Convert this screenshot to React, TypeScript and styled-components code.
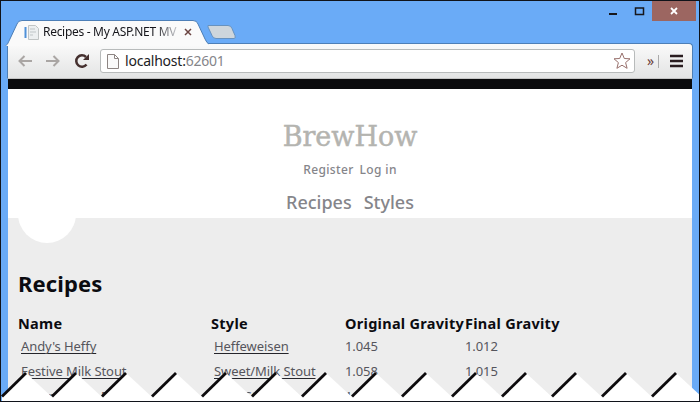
import React from 'react';
import styled, { createGlobalStyle } from 'styled-components';

const GlobalStyle = createGlobalStyle`
  *, *::before, *::after { box-sizing: border-box; }
  body { margin: 0; background: #6aabf7; font-family: "Noto Sans", "Open Sans", sans-serif; }
  svg { display: block; flex: none; }
`;

const BrowserWindow = styled.div`
  position: relative;
  display: flex;
  flex-direction: column;
  width: 700px;
  height: 402px;
  padding: 0 7px;
  border: 1px solid #10131a;
  background: #6aabf7;
  overflow: hidden;
`;

const TitleBar = styled.div`
  display: flex;
  justify-content: flex-end;
  flex: none;
  height: 19px;
  margin-right: -4px;
`;

const WindowButton = styled.div<{ $width: number; $close?: boolean }>`
  display: flex;
  align-items: center;
  justify-content: center;
  width: ${p => p.$width}px;
  height: 20px;
  background: ${p => (p.$close ? '#9c6661' : 'transparent')};
`;

const TabStrip = styled.div`
  display: flex;
  flex: none;
  height: 24px;
`;

const Tab = styled.div`
  position: relative;
  display: flex;
  align-items: center;
  width: 199px;
  height: 24px;
  padding-left: 16px;
`;

const TabShape = styled.svg`
  position: absolute;
  left: -3px;
  top: 0;
`;

const TabTitle = styled.div`
  position: relative;
  width: 137px;
  margin: 0 4px;
  white-space: nowrap;
  font-size: 12px;
  line-height: 20px;
  letter-spacing: -0.3px;
  color: transparent;
  background: linear-gradient(90deg, #15151a 82%, #c9cbd0 98%);
  background-clip: text;
`;

const TabIcon = styled.svg`
  position: relative;
`;

const Toolbar = styled.div`
  display: flex;
  align-items: center;
  flex: none;
  height: 36px;
  margin: -1px -1px 0;
  padding: 0 9px 0 10px;
  border: 1px solid #4d7fb7;
  border-bottom-color: #c4c4c4;
  border-radius: 0 4px 0 0;
  background: linear-gradient(#fafafa, #e3e4e4);
`;

const AddressBar = styled.div`
  display: flex;
  align-items: center;
  width: 536px;
  height: 24px;
  margin-left: 10px;
  padding: 0 3px 0 6px;
  border: 1px solid #b8bbbb;
  border-radius: 3px;
  background: #fff;
`;

const Address = styled.div`
  flex: 1;
  margin-left: 6px;
  font-size: 14px;
  line-height: 20px;
  letter-spacing: -0.22px;
  color: #1c1c24;
`;

const Port = styled.span`
  color: #85858a;
`;

const Chevron = styled.span`
  width: 9px;
  margin-left: 12px;
  font-size: 14px;
  line-height: 18px;
  color: #6b3c38;
`;

const Divider = styled.span`
  width: 1px;
  height: 13px;
  margin: 0 11px 0 2px;
  background: #aaa;
`;

const Page = styled.main`
  flex: 1;
  width: 684px;
  border-top: 10px solid #0b0b0d;
  background: #ededed;
`;

const SiteHeader = styled.header`
  display: flex;
  flex-direction: column;
  align-items: center;
  height: 129px;
  padding-top: 29px;
  background: #fff;
`;

const SiteTitle = styled.div`
  height: 38px;
  font-family: "DejaVu Serif", serif;
  font-size: 27px;
  line-height: 38px;
  white-space: nowrap;
  color: #b4b4b0;
  -webkit-text-stroke: 0.5px #b4b4b0;
`;

const LinkRow = styled.nav<{ $size: number; $gap: number; $height: number; $spacing: number }>`
  display: flex;
  gap: ${p => p.$gap}px;
  font-size: ${p => p.$size}px;
  font-weight: 500;
  line-height: ${p => p.$height}px;
  letter-spacing: ${p => p.$spacing}px;
  color: #85858a;
`;

const Dot = styled.div`
  width: 58px;
  height: 25px;
  margin-left: 10px;
  overflow: hidden;

  &::before {
    content: '';
    display: block;
    width: 58px;
    height: 58px;
    margin-top: -33px;
    border-radius: 50%;
    background: #fff;
  }
`;

const Heading = styled.h1`
  margin: 23px 0 0 10px;
  font-size: 22px;
  font-weight: 700;
  line-height: 34px;
  letter-spacing: 0.1px;
  color: #0b0b10;
`;

const Row = styled.div<{ $head?: boolean }>`
  display: grid;
  grid-template-columns: 193px 134px 120px 120px;
  height: ${p => (p.$head ? 22 : 25)}px;
  padding-left: 10px;
  font-size: ${p => (p.$head ? 14.5 : 13)}px;
  font-weight: ${p => (p.$head ? 700 : 400)};
  line-height: ${p => (p.$head ? 22 : 25)}px;
  letter-spacing: ${p => (p.$head ? 0.28 : -0.08)}px;
  white-space: nowrap;
  color: ${p => (p.$head ? '#0b0b10' : '#55555c')};
`;

const Table = styled.div`
  margin-top: 12px;
`;

const RecordLink = styled.span`
  padding-left: 3px;
  text-decoration: underline;
  text-decoration-color: #24242a;
  text-underline-offset: 2px;
  text-decoration-skip-ink: none;
`;

const TornEdge = styled.svg`
  position: absolute;
  left: -1px;
  bottom: 0;
`;

const recipes = [
  ["Andy's Heffy", 'Heffeweisen', '1.045', '1.012'],
  ['Festive Milk Stout', 'Sweet/Milk Stout', '1.058', '1.015'],
  ['Summer Rye Porter', 'Rare Stout', '1.048', '1.012'],
];

const teeth = Array.from({ length: 14 }, (_, i) => 2 + i * 50);

export default function App() {
  return (
    <>
      <GlobalStyle />
      <BrowserWindow>
        <TitleBar>
          <WindowButton $width={26}>
            <svg width="8" height="20"><path d="M0 13h8" stroke="#17171c" strokeWidth="2" /></svg>
          </WindowButton>
          <WindowButton $width={26}>
            <svg width="11" height="20"><path d="M1.500 7h8v6.500h-8z" fill="none" stroke="#17171c" strokeWidth="1.500" /></svg>
          </WindowButton>
          <WindowButton $width={44} $close>
            <svg width="8" height="8"><path d="M1 1l6 6M7 1L1 7" stroke="#fff" strokeWidth="1.800" /></svg>
          </WindowButton>
        </TitleBar>
        <TabStrip>
          <Tab>
            <TabShape width="204" height="26">
              <path d="M0 26Q3 24 4 21L12 4Q13 .5 17 .5H188Q192 .5 193 4L200 19Q202 23.500 204 24V26Z" fill="#fafafa" />
              <path d="M.5 26Q3 24 4 21L12 4Q13 .5 17 .5H188Q192 .5 193 4L200 19Q202 23.500 204 24" fill="none" stroke="#4d7fb7" />
            </TabShape>
            <TabIcon width="15" height="15">
              <path d="M4.500 .5h7l3 3v11h-10z" fill="#eceff0" stroke="#c0c4c4" />
              <path d="M1.500 2v11" stroke="#4f91d8" strokeWidth="2" />
              <path d="M6 4h5M6 7h6M6 10h3" stroke="#bfc5c7" />
            </TabIcon>
            <TabTitle>Recipes - My ASP.NET MV</TabTitle>
            <TabIcon width="8" height="8"><path d="M1 1l6 6M7 1L1 7" stroke="#6b4442" strokeWidth="1.500" /></TabIcon>
          </Tab>
          <svg width="32" height="24">
            <path d="M1 5.500h20q3 0 4 3l3 7q1 3-1 3H9q-3 0-4-3L1 7z" fill="#ced6dc" stroke="#6792bf" />
          </svg>
        </TabStrip>
        <Toolbar>
          <svg width="72" height="16">
            <path d="M14 8H1M6.500 3L1.500 8l5 5M28 8h13M35.500 3l5 5-5 5" fill="none" stroke="#aaa6a4" strokeWidth="2" />
            <path d="M68.500 11.500A5.700 5.700 0 1 1 68 4" fill="none" stroke="#45302f" strokeWidth="2.500" />
            <path d="M71 1v6h-6z" fill="#45302f" />
          </svg>
          <AddressBar>
            <svg width="12" height="15"><path d="M.5.5h7l4 4v10H.5zM7.500.5v4h4" fill="#fafafa" stroke="#8d8583" /></svg>
            <Address>localhost:<Port>62601</Port></Address>
            <svg width="18" height="18"><path d="M9 1l2.300 5.500 5.700.3-4.400 3.800 1.500 5.700L9 13.200l-5.100 3.100 1.500-5.700L1 6.800l5.700-.3z" fill="#fff" stroke="#98706c" /></svg>
          </AddressBar>
          <Chevron>»</Chevron>
          <Divider />
          <svg width="13" height="14"><path d="M0 2h13M0 7h13M0 12h13" stroke="#2a1d20" strokeWidth="2.500" /></svg>
        </Toolbar>
        <Page>
          <SiteHeader>
            <SiteTitle>BrewHow</SiteTitle>
            <LinkRow $size={12} $gap={6} $height={28} $spacing={0.35}><span>Register</span><span>Log in</span></LinkRow>
            <LinkRow $size={18} $gap={12} $height={36} $spacing={0}><span>Recipes</span><span>Styles</span></LinkRow>
          </SiteHeader>
          <Dot />
          <Heading>Recipes</Heading>
          <Table>
            <Row $head><span>Name</span><span>Style</span><span>Original Gravity</span><span>Final Gravity</span></Row>
            {recipes.map(([name, style, og, fg]) => (
              <Row key={name}>
                <div><RecordLink>{name}</RecordLink></div>
                <div><RecordLink>{style}</RecordLink></div>
                <span>{og}</span>
                <span>{fg}</span>
              </Row>
            ))}
          </Table>
        </Page>
        <TornEdge width="700" height="30">
          {teeth.map(x => (
            <g key={x}>
              <path d={`M${x} 26l24-24 26 24v4h-50z`} fill="#fff" />
              <path d={`M${x} 25.500L${x + 24} 2`} stroke="#0d0b0d" strokeWidth="2.800" />
            </g>
          ))}
        </TornEdge>
      </BrowserWindow>
    </>
  );
}
